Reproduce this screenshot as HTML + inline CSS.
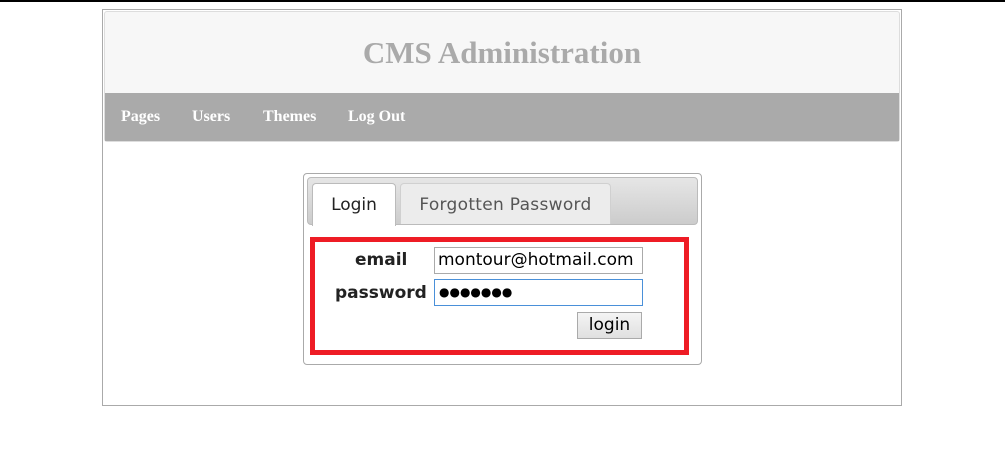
<!DOCTYPE html>
<html><head><style>
body{margin:0;width:1005px;height:473px;background:#fff;position:relative;overflow:hidden;font-family:"DejaVu Sans",Verdana,sans-serif}
.a{position:absolute;box-sizing:border-box}
</style></head><body>
<div class="a" style="left:0;top:0;width:1005px;height:2px;background:#000"></div>
<div class="a" style="left:102px;top:9px;width:800px;height:397px;border:1px solid #aaa"></div>
<div class="a" style="left:104px;top:11px;width:796px;height:131px;background:#f7f7f7;border:1px solid #ddd;border-radius:3px"></div>
<div class="a" style="left:104px;top:35px;width:796px;text-align:center;font:bold 31px 'Liberation Serif',serif;color:#aaa">CMS Administration</div>
<div class="a" style="left:105px;top:93px;width:794px;height:48px;background:#aaa"></div>
<div class="a" style="top:108px;left:121px;font:bold 16px 'Liberation Serif',serif;color:#fff">Pages</div>
<div class="a" style="top:108px;left:192px;font:bold 16px 'Liberation Serif',serif;color:#fff">Users</div>
<div class="a" style="top:108px;left:263px;font:bold 16px 'Liberation Serif',serif;color:#fff">Themes</div>
<div class="a" style="top:108px;left:348px;font:bold 16px 'Liberation Serif',serif;color:#fff">Log Out</div>

<div class="a" style="left:303px;top:173px;width:399px;height:192px;border:1px solid #aaa;border-radius:4px"></div>
<div class="a" style="left:307px;top:177px;width:391px;height:48px;border:1px solid #bbb;border-radius:4px;background:linear-gradient(#e6e6e6,#ccc)"></div>
<div class="a" style="left:312px;top:183px;width:84px;height:43px;background:#fff;border:1px solid #bbb;border-bottom:none;border-radius:4px 4px 0 0;font-size:17px;color:#222;text-align:center;line-height:42px">Login</div>
<div class="a" style="left:400px;top:183px;width:211px;height:41px;background:#ececec;border:1px solid #d0d0d0;border-bottom:none;border-radius:4px 4px 0 0;font-size:17px;color:#555;text-align:center;line-height:42px;letter-spacing:0.3px">Forgotten Password</div>
<div class="a" style="left:310px;top:237px;width:379px;height:118px;border:5px solid #ee1c25"></div>
<div class="a" style="left:355px;top:250px;font-weight:bold;font-size:17px;color:#222">email</div>
<div class="a" style="left:335px;top:283px;font-weight:bold;font-size:17px;color:#222">password</div>
<div class="a" style="left:434px;top:247px;width:209px;height:27px;border:1px solid #aaa;font-size:17px;line-height:25px;padding-left:3px;color:#000;white-space:nowrap;overflow:hidden">montour@hotmail.com</div>
<div class="a" style="left:434px;top:279px;width:209px;height:27px;border:1px solid #4a90d9;font-size:12px;line-height:25px;padding-left:4px;color:#000;letter-spacing:0px">●●●●●●●</div>
<div class="a" style="left:577px;top:312px;width:65px;height:27px;border:1px solid #aaa;background:linear-gradient(#f4f4f4,#e0e0e0);font-size:17px;text-align:center;line-height:25px;color:#000">login</div>
</body></html>
